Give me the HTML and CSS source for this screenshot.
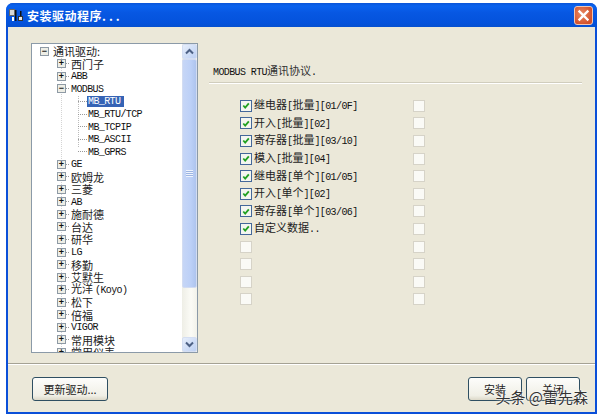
FILE: index.html
```html
<!DOCTYPE html>
<html lang="zh">
<head>
<meta charset="utf-8">
<title>安装驱动程序</title>
<link rel="stylesheet" href="styles.css">
</head>
<body>
<div class="window">
  <div class="titlebar">
    <svg class="appicon" width="14" height="13" viewBox="0 0 14 13">
      <rect x="0.5" y="0.5" width="5" height="6" fill="#d8d8d8" stroke="#666" stroke-width="1"/>
      <rect x="6" y="1" width="1.5" height="11" fill="#111"/>
      <rect x="3" y="8" width="2" height="4" fill="#fff"/>
      <rect x="9.5" y="7.5" width="4" height="4" fill="#e8e8e8" stroke="#333" stroke-width="1"/>
      <rect x="11" y="2" width="1.5" height="5" fill="#111"/>
    </svg>
    <span class="title-text">安装驱动程序<span class="dots">...</span></span>
    <div class="close">
      <svg width="17" height="17" viewBox="0 0 17 17">
        <path d="M4.5 4.5 L12.5 12.5 M12.5 4.5 L4.5 12.5" stroke="#fff" stroke-width="2.4" stroke-linecap="square" fill="none"/>
      </svg>
    </div>
  </div>
  <div class="client">
    <div class="main">
      <div class="tree">
        <div class="tree-list">
          <div class="row r0"><span class="box">−</span><span class="zh">通讯驱动:</span></div>
          <div class="row r1"><span class="box">+</span><span class="dash"></span><span class="zh">西门子</span></div>
          <div class="row r1"><span class="box">+</span><span class="dash"></span><span class="en">ABB</span></div>
          <div class="row r1"><span class="box">−</span><span class="dash"></span><span class="en">MODBUS</span></div>
          <div class="row r2"><span class="dash long"></span><span class="en sel">MB_RTU</span></div>
          <div class="row r2"><span class="dash long"></span><span class="en pad">MB_RTU/TCP</span></div>
          <div class="row r2"><span class="dash long"></span><span class="en pad">MB_TCPIP</span></div>
          <div class="row r2"><span class="dash long"></span><span class="en pad">MB_ASCII</span></div>
          <div class="row r2"><span class="dash long"></span><span class="en pad">MB_GPRS</span></div>
          <div class="row r1"><span class="box">+</span><span class="dash"></span><span class="en">GE</span></div>
          <div class="row r1"><span class="box">+</span><span class="dash"></span><span class="zh">欧姆龙</span></div>
          <div class="row r1"><span class="box">+</span><span class="dash"></span><span class="zh">三菱</span></div>
          <div class="row r1"><span class="box">+</span><span class="dash"></span><span class="en">AB</span></div>
          <div class="row r1"><span class="box">+</span><span class="dash"></span><span class="zh">施耐德</span></div>
          <div class="row r1"><span class="box">+</span><span class="dash"></span><span class="zh">台达</span></div>
          <div class="row r1"><span class="box">+</span><span class="dash"></span><span class="zh">研华</span></div>
          <div class="row r1"><span class="box">+</span><span class="dash"></span><span class="en">LG</span></div>
          <div class="row r1"><span class="box">+</span><span class="dash"></span><span class="zh">移勤</span></div>
          <div class="row r1"><span class="box">+</span><span class="dash"></span><span class="zh">艾默生</span></div>
          <div class="row r1"><span class="box">+</span><span class="dash"></span><span class="zh">光洋<span class="a koyo">(Koyo)</span></span></div>
          <div class="row r1"><span class="box">+</span><span class="dash"></span><span class="zh">松下</span></div>
          <div class="row r1"><span class="box">+</span><span class="dash"></span><span class="zh">倍福</span></div>
          <div class="row r1"><span class="box">+</span><span class="dash"></span><span class="en">VIGOR</span></div>
          <div class="row r1"><span class="box">+</span><span class="dash"></span><span class="zh">常用模块</span></div>
          <div class="row r1"><span class="box">+</span><span class="dash"></span><span class="zh">常用仪表</span></div>
        </div>
        <div class="scrollbar">
          <div class="sb-btn">
            <svg width="11" height="9" viewBox="0 0 11 9"><path d="M2 6.5 L5.5 3 L9 6.5" stroke="#4d6185" stroke-width="2" fill="none"/></svg>
          </div>
          <div class="thumb"><span class="grip"></span></div>
          <div class="sb-track"></div>
          <div class="sb-btn">
            <svg width="11" height="9" viewBox="0 0 11 9"><path d="M2 2.5 L5.5 6 L9 2.5" stroke="#4d6185" stroke-width="2" fill="none"/></svg>
          </div>
        </div>
      </div>
      <div class="panel">
        <div class="desc"><span class="a">MODBUS RTU</span>通讯协议<span class="a">.</span></div>
        <div class="rule"></div>
        <div class="checks">
          <div class="check-row"><span class="cb on"><svg width="11" height="11" viewBox="0 0 11 11"><path d="M2.5 5.5 L4.6 7.8 L8.6 3.2" stroke="#21a121" stroke-width="2" fill="none"/></svg></span><span class="lbl">继电器<span class="a">[</span>批量<span class="a">][01/0F]</span></span><span class="cb"></span></div>
          <div class="check-row"><span class="cb on"><svg width="11" height="11" viewBox="0 0 11 11"><path d="M2.5 5.5 L4.6 7.8 L8.6 3.2" stroke="#21a121" stroke-width="2" fill="none"/></svg></span><span class="lbl">开入<span class="a">[</span>批量<span class="a">][02]</span></span><span class="cb"></span></div>
          <div class="check-row"><span class="cb on"><svg width="11" height="11" viewBox="0 0 11 11"><path d="M2.5 5.5 L4.6 7.8 L8.6 3.2" stroke="#21a121" stroke-width="2" fill="none"/></svg></span><span class="lbl">寄存器<span class="a">[</span>批量<span class="a">][03/10]</span></span><span class="cb"></span></div>
          <div class="check-row"><span class="cb on"><svg width="11" height="11" viewBox="0 0 11 11"><path d="M2.5 5.5 L4.6 7.8 L8.6 3.2" stroke="#21a121" stroke-width="2" fill="none"/></svg></span><span class="lbl">模入<span class="a">[</span>批量<span class="a">][04]</span></span><span class="cb"></span></div>
          <div class="check-row"><span class="cb on"><svg width="11" height="11" viewBox="0 0 11 11"><path d="M2.5 5.5 L4.6 7.8 L8.6 3.2" stroke="#21a121" stroke-width="2" fill="none"/></svg></span><span class="lbl">继电器<span class="a">[</span>单个<span class="a">][01/05]</span></span><span class="cb"></span></div>
          <div class="check-row"><span class="cb on"><svg width="11" height="11" viewBox="0 0 11 11"><path d="M2.5 5.5 L4.6 7.8 L8.6 3.2" stroke="#21a121" stroke-width="2" fill="none"/></svg></span><span class="lbl">开入<span class="a">[</span>单个<span class="a">][02]</span></span><span class="cb"></span></div>
          <div class="check-row"><span class="cb on"><svg width="11" height="11" viewBox="0 0 11 11"><path d="M2.5 5.5 L4.6 7.8 L8.6 3.2" stroke="#21a121" stroke-width="2" fill="none"/></svg></span><span class="lbl">寄存器<span class="a">[</span>单个<span class="a">][03/06]</span></span><span class="cb"></span></div>
          <div class="check-row"><span class="cb on"><svg width="11" height="11" viewBox="0 0 11 11"><path d="M2.5 5.5 L4.6 7.8 L8.6 3.2" stroke="#21a121" stroke-width="2" fill="none"/></svg></span><span class="lbl">自定义数据<span class="a">..</span></span><span class="cb"></span></div>
          <div class="check-row"><span class="cb"></span><span class="lbl"></span><span class="cb"></span></div>
          <div class="check-row"><span class="cb"></span><span class="lbl"></span><span class="cb"></span></div>
          <div class="check-row"><span class="cb"></span><span class="lbl"></span><span class="cb"></span></div>
          <div class="check-row"><span class="cb"></span><span class="lbl"></span><span class="cb"></span></div>
        </div>
      </div>
    </div>
    <div class="footer">
      <button class="btn update">更新驱动...</button>
      <div class="spacer"></div>
      <button class="btn">安装</button>
      <button class="btn">关闭</button>
    </div>
    <div class="watermark">头条 @雷先森</div>
  </div>
</div>
</body>
</html>
```
FILE: styles.css
```css
* { box-sizing: border-box; }
html, body { margin: 0; padding: 0; background: #fff; }
body {
  width: 601px;
  height: 417px;
  padding: 3px 4px 3px 6px;
  overflow: hidden;
  font-family: "Liberation Mono", "Noto Sans CJK SC", monospace;
  color: #222;
}
.window {
  height: 411px;
  display: flex;
  flex-direction: column;
  background: #0a4fd8;
  border-radius: 7px 7px 0 0;
  padding: 0 2px 2px;
}
.titlebar {
  height: 24px;
  margin: 0 -2px;
  padding: 0 4px 0 3px;
  display: flex;
  align-items: center;
  gap: 4px;
  border-radius: 7px 7px 0 0;
  background: linear-gradient(#0a55d8 0, #0a62ee 3px, #0757e2 10px, #0452dc 20px, #0550d0 24px);
}
.appicon { flex: none; }
.title-text {
  flex: 1;
  color: #fff;
  font: bold 12px "Noto Sans CJK SC", sans-serif;
  letter-spacing: .5px;
}
.dots { letter-spacing: 3px; }
.close {
  width: 19px;
  height: 19px;
  flex: none;
  border: 1px solid #f1c6b4;
  border-radius: 3px;
  background: radial-gradient(circle at 40% 40%, #e88a64, #d2512b 75%);
  display: flex;
  align-items: center;
  justify-content: center;
  overflow: hidden;
}
.client {
  flex: 1;
  position: relative;
  display: flex;
  flex-direction: column;
  background: #ebe8d9;
  min-height: 0;
}
.main {
  height: 337px;
  padding: 16px 0 0 23px;
  display: flex;
  border-bottom: 1px solid #a5a294;
  box-shadow: 0 1px 0 #fff;
}
.tree {
  width: 167px;
  height: 310px;
  flex: none;
  display: flex;
  background: #fff;
  border: 1px solid #8b9aa8;
  overflow: hidden;
}
.tree-list {
  flex: 1;
  padding-top: 1px;
  overflow: hidden;
  background-image:
    repeating-linear-gradient(#bbb 0 1px, transparent 1px 2px),
    repeating-linear-gradient(#d4d4d4 0 1px, transparent 1px 2px);
  background-size: 1px 52px, 1px 300px;
  background-repeat: no-repeat;
  background-position: 46px 52px, 29px 12px;
}
.row {
  height: 12.56px;
  display: flex;
  align-items: center;
  white-space: nowrap;
}
.r0 { padding-left: 8px; }
.r1 { padding-left: 25px; }
.r2 { padding-left: 46px; }
.box {
  width: 9px;
  height: 9px;
  flex: none;
  border: 1px solid #8e9aa5;
  background: #eeeee6;
  font: bold 9px/7px "Liberation Sans", sans-serif;
  text-align: center;
  color: #111;
}
.r0 .box { margin-right: 4px; }
.dash {
  width: 4px;
  height: 1px;
  margin-right: 1px;
  flex: none;
  background: repeating-linear-gradient(90deg, #999 0 1px, transparent 1px 2px);
}
.dash.long { width: 9px; margin-right: 0; }
.zh { font: 11px/12px "Noto Sans CJK SC", sans-serif; color: #222; }
.en { font: 10px/11px "Liberation Mono", monospace; letter-spacing: -.6px; color: #111; margin-top: 1px; }
.a { font: 10px/12px "Liberation Mono", monospace; letter-spacing: -.6px; color: #111; }
.koyo { margin-left: 2px; }
.pad { padding: 0 1px; }
.sel { background: #3563b5; color: #fff; padding: 0 4px 0 1px; }
.scrollbar {
  width: 15px;
  flex: none;
  display: flex;
  flex-direction: column;
  background: linear-gradient(90deg, #eeeee6, #fbfbf6 60%, #f2f2ea);
}
.sb-btn {
  height: 15px;
  flex: none;
  display: flex;
  align-items: center;
  justify-content: center;
  background: linear-gradient(135deg, #e6eefb, #bdd0f3);
  border: 1px solid #d4def2;
  border-radius: 2px;
}
.thumb {
  height: 229px;
  flex: none;
  display: flex;
  align-items: center;
  justify-content: center;
  background: linear-gradient(90deg, #c6d6f6, #bcd0f7 60%, #aec4ee);
  border: 1px solid #d2dcf2;
  border-radius: 2px;
}
.grip {
  width: 7px;
  height: 7px;
  background: repeating-linear-gradient(#eef3fd 0 1px, #9db5e2 1px 2px);
}
.sb-track { flex: 1; }
.panel {
  width: 376px;
  padding-left: 15px;
  flex: none;
}
.desc {
  height: 23px;
  margin-top: 16px;
  font: 11px/23px "Noto Sans CJK SC", sans-serif;
  color: #333;
}
.rule {
  height: 2px;
  margin: 0 -8px 0 -4px;
  background: #d0cdbd;
  border-bottom: 1px solid #fff;
}
.checks {
  margin-top: 13px;
  padding-left: 27px;
}
.check-row {
  height: 17.6px;
  display: flex;
  align-items: center;
}
.cb {
  width: 12px;
  height: 12px;
  flex: none;
  border: 1px solid #d6d3c8;
  background: #fafaf6;
  display: flex;
  align-items: center;
  justify-content: center;
}
.cb.on { border-color: #44689a; background: #f4f6f0; }
.lbl {
  width: 161px;
  flex: none;
  padding-left: 2px;
  font: 11px/13px "Noto Sans CJK SC", sans-serif;
  color: #222;
  white-space: nowrap;
}
.footer {
  flex: 1;
  padding: 13px 15px 0 24px;
  display: flex;
  align-items: flex-start;
  gap: 4px;
}
.spacer { flex: 1; }
.btn {
  width: 54px;
  height: 24px;
  padding: 0;
  border: 1px solid #2f4f62;
  border-radius: 3px;
  background: linear-gradient(#fdfdfb, #f0efe6 80%, #dcd8c8);
  font: 11px "Noto Sans CJK SC", sans-serif;
  color: #222;
}
.update { width: 76px; }
.watermark {
  position: absolute;
  right: 7px;
  bottom: 6px;
  font: 15px/18px "Noto Sans CJK SC", sans-serif;
  color: #333;
  text-shadow: 0 0 2px #fff, 0 0 2px #fff;
}
```
